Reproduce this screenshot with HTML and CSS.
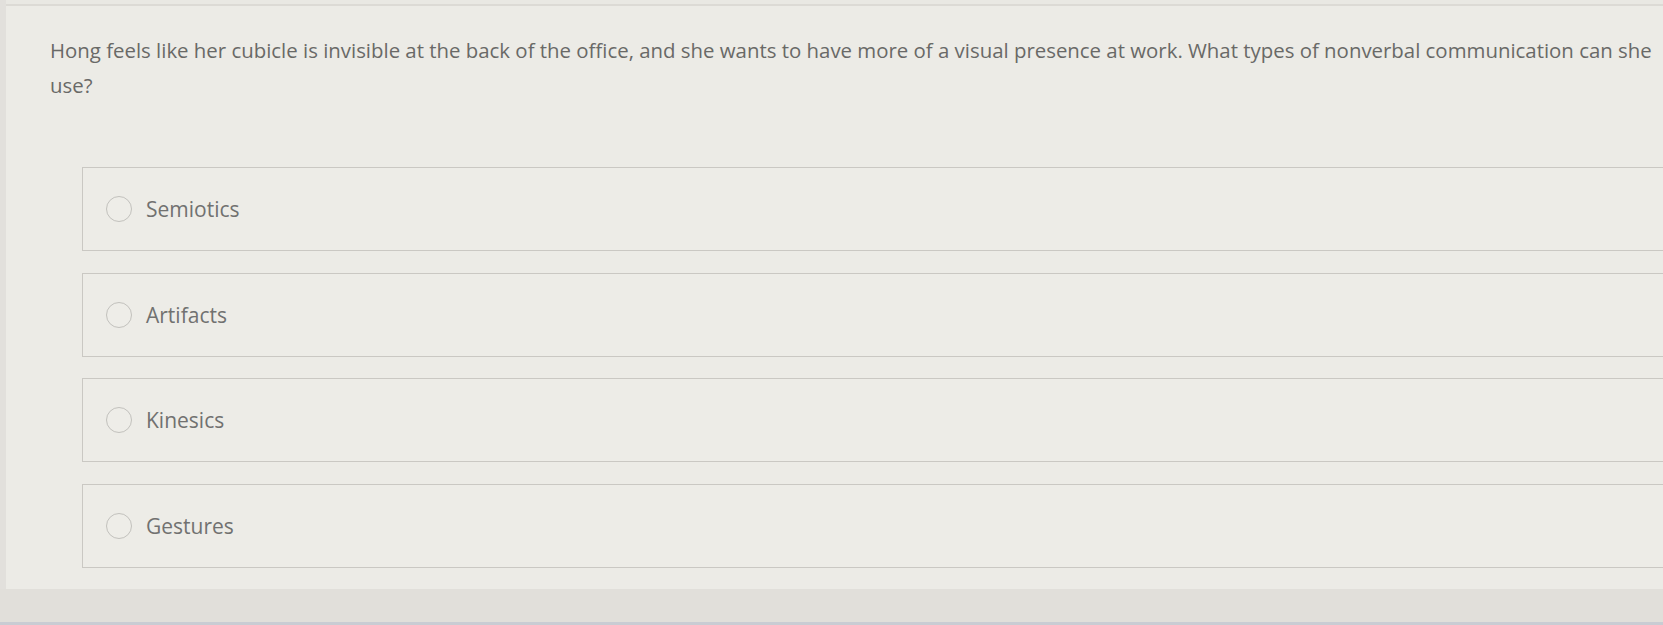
FILE: index.html
```html
<!DOCTYPE html>
<html lang="en">
<head>
<meta charset="utf-8">
<title>Question</title>
<link rel="stylesheet" href="styles.css">
</head>
<body>
<div class="page">
  <div class="topline"></div>
  <p class="question">Hong feels like her cubicle is invisible at the back of the office, and she wants to have more of a visual presence at work. What types of nonverbal communication can she use?</p>
  <ul class="options">
    <li class="option"><span class="radio"></span><span class="label">Semiotics</span></li>
    <li class="option"><span class="radio"></span><span class="label">Artifacts</span></li>
    <li class="option"><span class="radio"></span><span class="label">Kinesics</span></li>
    <li class="option"><span class="radio"></span><span class="label">Gestures</span></li>
  </ul>
</div>
<div class="footer"></div>
</body>
</html>
```
FILE: styles.css
```css
html, body {
  margin: 0;
  padding: 0;
}
body {
  background: #ebeae5;
  font-family: "Open Sans", "Noto Sans", sans-serif;
  width: 1663px;
  height: 625px;
  overflow: hidden;
  display: flex;
  flex-direction: column;
}
.page {
  flex: 0 0 589px;
  border-left: 6px solid #e2e0dc;
  box-sizing: border-box;
  background: #ecebe6;
}
.topline {
  height: 4px;
  border-bottom: 2px solid #dcdad5;
  background: #e9e8e3;
}
.question {
  margin: 27px 8px 0 44px;
  font-size: 20.4px;
  line-height: 35px;
  color: #696967;
}
.options {
  list-style: none;
  margin: 64px 0 0 76px;
  padding: 0;
  display: flex;
  flex-direction: column;
  gap: 21.5px;
}
.option {
  height: 84px;
  box-sizing: border-box;
  border: 1.5px solid #cac8c3;
  border-right: none;
  background: #edece7;
  display: flex;
  align-items: center;
  padding-left: 23px;
  gap: 14px;
}
.radio {
  width: 26px;
  height: 26px;
  box-sizing: border-box;
  border-radius: 50%;
  border: 1.5px solid #c2c1bd;
  background: #eeede8;
  flex: 0 0 auto;
}
.label {
  font-size: 21px;
  color: #717170;
}
.footer {
  flex: 1;
  background: #e1dfda;
  border-bottom: 3px solid #c9ccd3;
}
```
